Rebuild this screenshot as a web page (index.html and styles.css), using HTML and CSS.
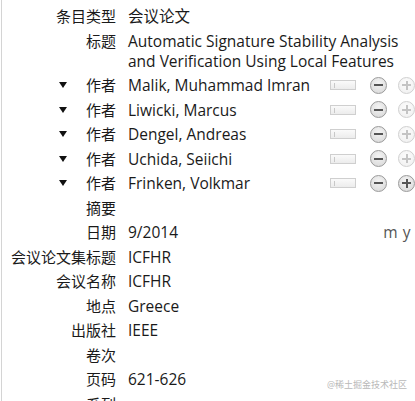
FILE: index.html
```html
<!DOCTYPE html>
<html>
<head>
<meta charset="utf-8">
<link rel="stylesheet" href="styles.css">
</head>
<body>
<div class="pane">
  <div class="grid">
    <div class="label">条目类型</div><div class="value">会议论文</div>
    <div class="label">标题</div><div class="value title">Automatic Signature Stability Analysis and Verification Using Local Features</div>

    <div class="label"><span class="twisty"></span>作者</div>
    <div class="value creator"><span class="name">Malik, Muhammad Imran</span><span class="switch"><i></i></span><span class="btn minus"></span><span class="btn plus off"></span></div>

    <div class="label"><span class="twisty"></span>作者</div>
    <div class="value creator"><span class="name">Liwicki, Marcus</span><span class="switch"><i></i></span><span class="btn minus"></span><span class="btn plus off"></span></div>

    <div class="label"><span class="twisty"></span>作者</div>
    <div class="value creator"><span class="name">Dengel, Andreas</span><span class="switch"><i></i></span><span class="btn minus"></span><span class="btn plus off"></span></div>

    <div class="label"><span class="twisty"></span>作者</div>
    <div class="value creator"><span class="name">Uchida, Seiichi</span><span class="switch"><i></i></span><span class="btn minus"></span><span class="btn plus off"></span></div>

    <div class="label"><span class="twisty"></span>作者</div>
    <div class="value creator"><span class="name">Frinken, Volkmar</span><span class="switch"><i></i></span><span class="btn minus"></span><span class="btn plus"></span></div>

    <div class="label">摘要</div><div class="value"></div>
    <div class="label">日期</div><div class="value date"><span>9/2014</span><span class="dmy">m y</span></div>
    <div class="label">会议论文集标题</div><div class="value">ICFHR</div>
    <div class="label">会议名称</div><div class="value">ICFHR</div>
    <div class="label">地点</div><div class="value">Greece</div>
    <div class="label">出版社</div><div class="value">IEEE</div>
    <div class="label">卷次</div><div class="value"></div>
    <div class="label">页码</div><div class="value">621-626</div>
    <div class="label">系列</div><div class="value"></div>
  </div>
  <div class="watermark">@稀土掘金技术社区</div>
</div>
</body>
</html>
```
FILE: styles.css
```css
html, body {
  margin: 0;
  padding: 0;
  background: #fff;
  overflow: hidden;
}
body {
  width: 415px;
  height: 401px;
  font-family: "Open Sans", "Noto Sans CJK SC", sans-serif;
  font-size: 15px;
  color: #1a1a1a;
}
.pane {
  position: relative;
  margin-left: 1px;
  border-left: 1px solid #d4d4d4;
  height: 401px;
  padding-top: 4px;
  box-sizing: border-box;
}
.grid {
  display: grid;
  grid-template-columns: 114px 1fr;
  column-gap: 12px;
}
.label, .value {
  line-height: 20px;
  padding: 2px 0 2.5px;
  min-height: 20px;
}
.value {
  font-size: 15.5px;
}
.label {
  text-align: right;
  display: flex;
  justify-content: flex-end;
  align-items: flex-start;
}
.twisty {
  width: 0;
  height: 0;
  border-left: 4.5px solid transparent;
  border-right: 4.5px solid transparent;
  border-top: 6px solid #111;
  margin: 7px 19px 0 0;
}
.title {
  padding-right: 4px;
}
.creator {
  display: flex;
  align-items: center;
}
.creator .name {
  flex: 1;
}
.switch {
  position: relative;
  width: 26px;
  height: 10px;
  border: 1px solid #cfcfcf;
  background: linear-gradient(#fafafa, #ececec);
  box-sizing: border-box;
  margin-right: 14px;
}
.switch i {
  position: absolute;
  left: 3px;
  top: 2px;
  width: 1px;
  height: 5px;
  background: #c8c8c8;
}
.btn {
  position: relative;
  width: 17px;
  height: 17px;
  border-radius: 50%;
  box-sizing: border-box;
  border: 1px solid #9a9a9a;
  background: radial-gradient(circle at 50% 35%, #f4f4f4, #d6d6d6);
  flex: none;
}
.btn::before, .btn::after {
  content: "";
  position: absolute;
  background: #555;
  left: 3px;
  right: 3px;
  top: 6.5px;
  height: 2px;
}
.minus {
  margin-right: 11px;
}
.plus::after {
  left: 6.5px;
  right: auto;
  width: 2px;
  top: 3px;
  height: 9px;
}
.plus.off {
  border-color: #d0d0d0;
  background: radial-gradient(circle at 50% 35%, #fcfcfc, #efefef);
}
.plus.off::before, .plus.off::after {
  background: #c4c4c4;
}
.date {
  display: flex;
  justify-content: space-between;
}
.dmy {
  color: #555;
  padding-right: 4px;
  letter-spacing: 0.5px;
}
.watermark {
  position: absolute;
  left: 325px;
  top: 378px;
  font-size: 9px;
  color: #b8b8b8;
  line-height: 14px;
  white-space: nowrap;
}
```
